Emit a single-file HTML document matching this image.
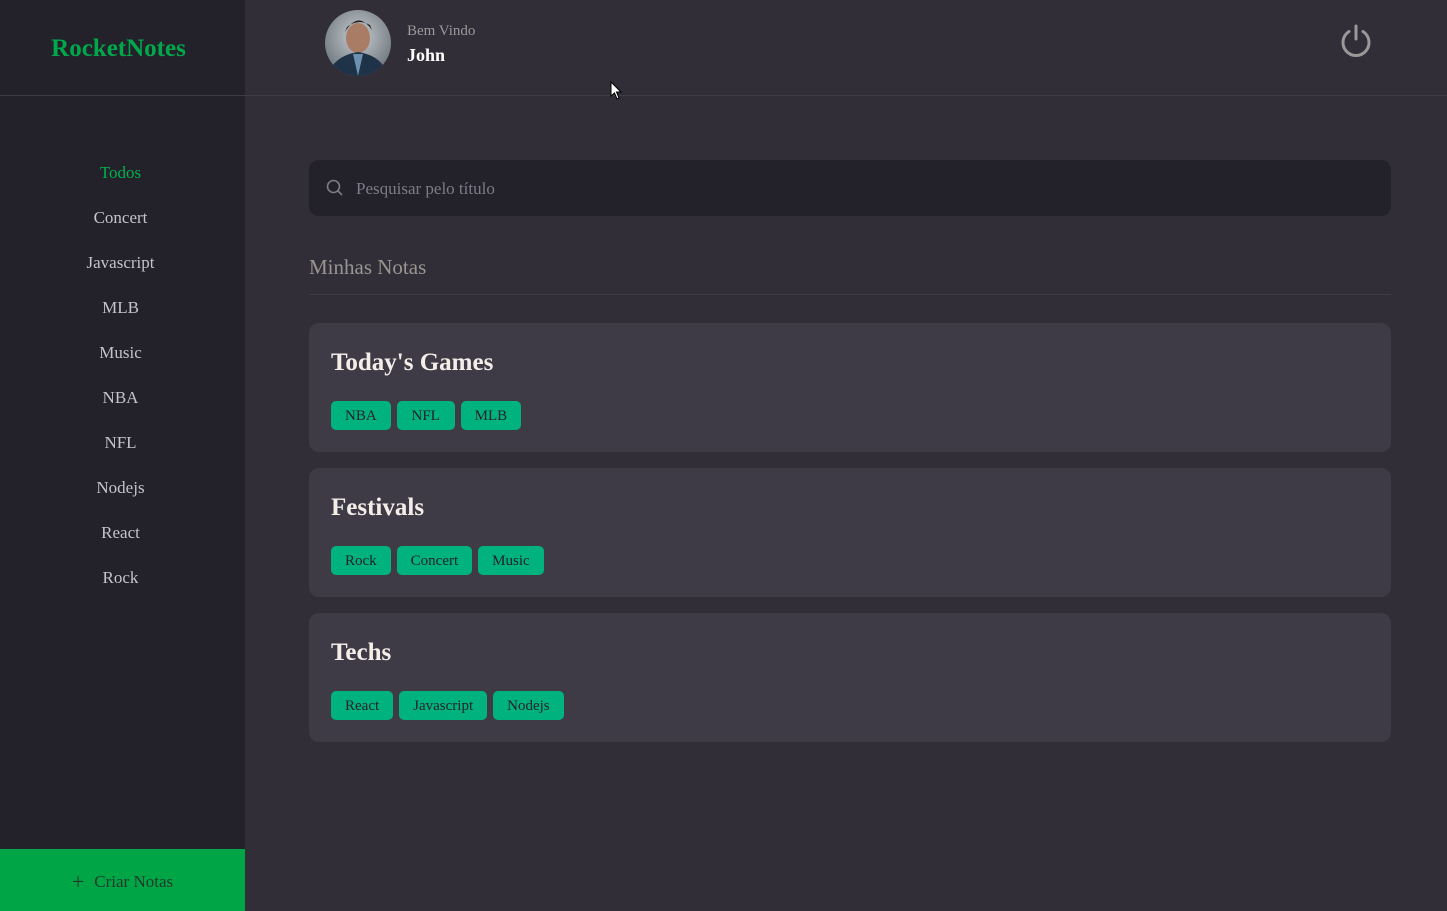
<!DOCTYPE html>
<html><head><meta charset="utf-8"><style>
*{margin:0;padding:0;box-sizing:border-box}
body{width:1447px;height:911px;background:#312e38;font-family:"Liberation Serif","DejaVu Serif",serif;position:relative;overflow:hidden}
.side{position:absolute;left:0;top:0;width:245px;height:911px;background:#232129}
.logo{position:absolute;left:-4px;top:2px;width:245px;height:93px;display:flex;align-items:center;justify-content:center;color:#00a84b;font-weight:bold;font-size:25px}
.bl{position:absolute;left:0;top:95px;width:1447px;height:1px;background:#3e3b47}
.menu{position:absolute;top:160px;left:-2px;width:245px;text-align:center}
.menu div{height:45px;line-height:26px;font-size:17px;color:#c4c4cc}
.menu .a{color:#00b04f}
.btn{position:absolute;left:0;bottom:0;width:245px;height:62px;background:#00a646;color:#1f3a2a;font-size:17px;display:flex;align-items:center;justify-content:center;gap:10px;padding-top:4px}
.hdr{position:absolute;left:245px;top:0;right:0;height:95px}
.av{position:absolute;left:80px;top:10px;width:66px;height:66px;border-radius:50%;overflow:hidden}
.bv{position:absolute;left:162px;top:23px;color:#999;font-size:15px}
.jn{position:absolute;left:162px;top:45px;color:#fff;font-size:18px;font-weight:bold}
.pw{position:absolute;left:1093px;top:23px}
.search{position:absolute;left:309px;top:160px;width:1082px;height:56px;background:#232129;border-radius:10px}
.search span{position:absolute;left:47px;top:19px;color:#7c7c8a;font-size:17px}
.mn{position:absolute;left:309px;top:255px;color:#999591;font-size:21px}
.line{position:absolute;left:309px;top:294px;width:1082px;height:1px;background:#3e3b47}
.card{position:absolute;left:309px;width:1082px;height:129px;background:#3e3b47;border-radius:10px}
.card h2{position:absolute;left:22px;top:26px;color:#f4ede8;font-size:25px}
.tags{position:absolute;left:22px;top:78px;display:flex;gap:6px}
.tags span{background:#00b37e;color:#232129;font-size:15px;height:29px;line-height:31px;padding:0 14px;border-radius:5px;min-width:58px;text-align:center}
</style></head><body>
<div class="side">
<div class="logo">RocketNotes</div>
<div class="menu"><div class="a">Todos</div><div>Concert</div><div>Javascript</div><div>MLB</div><div>Music</div><div>NBA</div><div>NFL</div><div>Nodejs</div><div>React</div><div>Rock</div></div>
<div class="btn"><span style="font-size:22px;line-height:1">+</span><span>Criar Notas</span></div>
</div>
<div class="bl"></div>
<div class="hdr">
<div class="av"><svg width="66" height="66"><defs><radialGradient id="g" cx="50%" cy="40%" r="60%"><stop offset="0" stop-color="#c9cdd0"/><stop offset="1" stop-color="#6f7880"/></radialGradient></defs><rect width="66" height="66" fill="url(#g)"/><ellipse cx="33" cy="28" rx="12" ry="15" fill="#a97c66"/><path d="M20 22 Q33 0 47 20 L45 15 Q33 8 22 17Z" fill="#1d1f22"/><path d="M3 66 Q8 46 33 42 Q58 46 63 66Z" fill="#1e3248"/><path d="M28 44 L33 66 L38 44Z" fill="#6d8fb0"/></svg></div>
<div class="bv">Bem Vindo</div>
<div class="jn">John</div>
<svg class="pw" width="36" height="36" viewBox="0 0 36 36"><path d="M11 8.5 A13 13 0 1 0 25 8.5" fill="none" stroke="#999" stroke-width="3" stroke-linecap="round"/><line x1="18" y1="3" x2="18" y2="16" stroke="#999" stroke-width="3" stroke-linecap="round"/></svg>
</div>
<svg style="position:absolute;left:610px;top:81px" width="12" height="20"><path d="M1 1 L1 15 L4.5 12 L7 18 L9 17 L6.5 11 L11 11Z" fill="#fff" stroke="#000" stroke-width="1"/></svg>
<div class="search"><svg style="position:absolute;left:17px;top:19px" width="18" height="18"><circle cx="7.5" cy="7.5" r="6" fill="none" stroke="#7c7c8a" stroke-width="1.6"/><line x1="12" y1="12" x2="16" y2="16" stroke="#7c7c8a" stroke-width="1.6"/></svg><span>Pesquisar pelo título</span></div>
<div class="mn">Minhas Notas</div>
<div class="line"></div>
<div class="card" style="top:323px"><h2>Today's Games</h2><div class="tags"><span>NBA</span><span>NFL</span><span>MLB</span></div></div>
<div class="card" style="top:468px"><h2>Festivals</h2><div class="tags"><span>Rock</span><span>Concert</span><span>Music</span></div></div>
<div class="card" style="top:613px"><h2>Techs</h2><div class="tags"><span>React</span><span>Javascript</span><span>Nodejs</span></div></div>
</body></html>
